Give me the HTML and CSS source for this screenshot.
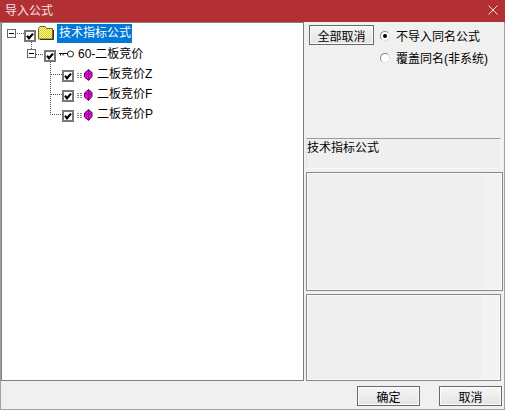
FILE: index.html
```html
<!DOCTYPE html>
<html lang="zh">
<head>
<meta charset="utf-8">
<title>导入公式</title>
<link rel="stylesheet" href="styles.css">
</head>
<body>
<div class="window">
  <header class="titlebar">
    <span class="title">导入公式</span>
    <svg class="close" width="10" height="10" viewBox="0 0 10 10"><path d="M0.5 0.5L9.5 9.5M9.5 0.5L0.5 9.5" stroke="#f3dcdc" stroke-width="1" fill="none"/></svg>
  </header>
  <main class="content">
    <section class="tree">
      <svg class="connectors" width="80" height="110" viewBox="0 0 80 110">
        <g stroke="#555" stroke-width="1" stroke-dasharray="1 1" fill="none">
          <path d="M16 9.5H24"/>
          <path d="M30.5 18V26"/>
          <path d="M35 30.5H43"/>
          <path d="M49.5 38V90.5H62"/>
          <path d="M50 50.5H62"/>
          <path d="M50 70.5H62"/>
        </g>
      </svg>
      <div class="row level0">
        <span class="expander"></span>
        <svg class="check" width="12" height="12" viewBox="0 0 12 12"><rect x="1" y="1" width="10" height="10" fill="#fff" stroke="#777" stroke-width="2"/><path d="M3 5.8L5 8.2L9 3.6" stroke="#000" stroke-width="2.2" fill="none"/></svg>
        <svg class="folder" width="16" height="14" viewBox="0 0 16 14">
          <defs><pattern id="dither" width="2" height="2" patternUnits="userSpaceOnUse"><rect width="2" height="2" fill="#ffff70"/><rect width="1" height="1" fill="#d8c840"/><rect x="1" y="1" width="1" height="1" fill="#d8c840"/></pattern></defs>
          <path d="M0.5 13V2.5L2 0.5H7L8.5 2.5H14.5V13Z" fill="url(#dither)" stroke="#6b6020" stroke-width="1"/>
          <path d="M15.5 4V13.5H2" stroke="#333" fill="none"/>
        </svg>
        <span class="label selected">技术指标公式</span>
      </div>
      <div class="row level1">
        <span class="expander"></span>
        <svg class="check" width="12" height="12" viewBox="0 0 12 12"><rect x="1" y="1" width="10" height="10" fill="#fff" stroke="#777" stroke-width="2"/><path d="M3 5.8L5 8.2L9 3.6" stroke="#000" stroke-width="2.2" fill="none"/></svg>
        <svg class="key" width="15" height="8" viewBox="0 0 15 8"><circle cx="11.5" cy="4" r="3" fill="#fff" stroke="#222"/><path d="M0 3.5H9M1.5 3.5V5.5M4 3.5V5.5" stroke="#111" fill="none"/></svg>
        <span class="label">60-二板竞价</span>
      </div>
      <div class="row level2">
        <svg class="check" width="12" height="12" viewBox="0 0 12 12"><rect x="1" y="1" width="10" height="10" fill="#fff" stroke="#777" stroke-width="2"/><path d="M3 5.8L5 8.2L9 3.6" stroke="#000" stroke-width="2.2" fill="none"/></svg>
        <svg class="gem" width="16" height="12" viewBox="0 0 16 12"><path d="M0 4.5H6M0 6.5H6M0 8.5H6" stroke="#888" stroke-dasharray="2 1" fill="none"/><path d="M11.5 0.5L15 3.5V7.5L11.5 11.5L7.5 8V4Z" fill="#f000e0" stroke="#401040"/><path d="M11.5 1V11M8 4L11.5 6L15 4" stroke="#900090" fill="none"/></svg>
        <span class="label">二板竞价Z</span>
      </div>
      <div class="row level2">
        <svg class="check" width="12" height="12" viewBox="0 0 12 12"><rect x="1" y="1" width="10" height="10" fill="#fff" stroke="#777" stroke-width="2"/><path d="M3 5.8L5 8.2L9 3.6" stroke="#000" stroke-width="2.2" fill="none"/></svg>
        <svg class="gem" width="16" height="12" viewBox="0 0 16 12"><path d="M0 4.5H6M0 6.5H6M0 8.5H6" stroke="#888" stroke-dasharray="2 1" fill="none"/><path d="M11.5 0.5L15 3.5V7.5L11.5 11.5L7.5 8V4Z" fill="#f000e0" stroke="#401040"/><path d="M11.5 1V11M8 4L11.5 6L15 4" stroke="#900090" fill="none"/></svg>
        <span class="label">二板竞价F</span>
      </div>
      <div class="row level2">
        <svg class="check" width="12" height="12" viewBox="0 0 12 12"><rect x="1" y="1" width="10" height="10" fill="#fff" stroke="#777" stroke-width="2"/><path d="M3 5.8L5 8.2L9 3.6" stroke="#000" stroke-width="2.2" fill="none"/></svg>
        <svg class="gem" width="16" height="12" viewBox="0 0 16 12"><path d="M0 4.5H6M0 6.5H6M0 8.5H6" stroke="#888" stroke-dasharray="2 1" fill="none"/><path d="M11.5 0.5L15 3.5V7.5L11.5 11.5L7.5 8V4Z" fill="#f000e0" stroke="#401040"/><path d="M11.5 1V11M8 4L11.5 6L15 4" stroke="#900090" fill="none"/></svg>
        <span class="label">二板竞价P</span>
      </div>
    </section>
    <aside class="side">
      <div class="controls">
        <button class="btn toggle" type="button">全部取消</button>
        <div class="radios">
          <label class="radio"><span class="dot on"></span>不导入同名公式</label>
          <label class="radio"><span class="dot"></span>覆盖同名(非系统)</label>
        </div>
      </div>
      <div class="info">技术指标公式</div>
      <div class="pane pane-mid"></div>
      <div class="pane pane-low"></div>
    </aside>
  </main>
  <footer class="footer">
    <button class="btn action" type="button">确定</button>
    <button class="btn action" type="button">取消</button>
  </footer>
</div>
</body>
</html>
```
FILE: styles.css
```css
* { box-sizing: border-box; }
html, body { margin: 0; padding: 0; }
body {
  width: 505px;
  height: 410px;
  overflow: hidden;
  font-family: "Liberation Sans", "Noto Sans CJK SC", sans-serif;
  font-size: 12px;
  color: #000;
  background: #f0f0f0;
}
.window {
  width: 505px;
  height: 410px;
  display: flex;
  flex-direction: column;
  background: #f0f0f0;
  border-left: 1px solid #a0a0a0;
  border-right: 1px solid #a0a0a0;
  border-bottom: 1px solid #a0a0a0;
}
.titlebar {
  height: 22px;
  margin: 0 -1px;
  padding: 0 7px 3px 5px;
  flex: none;
  display: flex;
  align-items: center;
  justify-content: space-between;
  background: #b23034;
  color: #f4e4e4;
}
.content {
  height: 359px;
  flex: none;
  display: flex;
}
.tree {
  position: relative;
  width: 303px;
  height: 359px;
  flex: none;
  padding-top: 1px;
  background: #fff;
  border: 1px solid #808080;
}
.connectors { position: absolute; left: -1px; top: 1px; }
.row {
  height: 20px;
  display: flex;
  align-items: flex-start;
  line-height: 19px;
}
.level0 { padding-left: 5px; }
.level1 { padding-left: 25px; }
.level2 { padding-left: 60px; }
.expander {
  position: relative;
  width: 9px;
  height: 9px;
  margin-top: 5px;
  margin-right: 8px;
  background: #fff;
  border: 1px solid #666;
  flex: none;
}
.expander::after {
  content: "";
  position: absolute;
  left: 1px;
  top: 3px;
  width: 5px;
  height: 1px;
  background: #000;
}
.check { margin-top: 6px; flex: none; }
.folder { margin-left: 2px; margin-top: 2px; flex: none; }
.key { margin-left: 3px; margin-top: 6px; flex: none; }
.gem { margin-left: 3px; margin-top: 5px; flex: none; }
.label { white-space: nowrap; }
.level0 .label { margin-left: 3px; padding: 0 1px 0 2px; }
.level1 .label { margin-left: 4px; margin-top: 1px; }
.level2 .label { margin-left: 4px; margin-top: 1px; }
.selected { background: #0078d7; color: #fff; }
.side {
  flex: 1;
  display: flex;
  flex-direction: column;
  padding-left: 2px;
  position: relative;
}
.controls {
  height: 116px;
  flex: none;
  display: flex;
  padding: 3px 0 0 3px;
  align-items: flex-start;
}
.btn {
  font: inherit;
  color: #000;
  padding: 0;
  border: 1px solid #6a6a6a;
  background: linear-gradient(#f6f6f6, #e4e4e4);
  box-shadow: inset 0 0 0 1px #fbfbfb;
}
.toggle { width: 65px; height: 20px; }
.radios {
  margin-left: 6px;
  display: flex;
  flex-direction: column;
  gap: 3px;
  padding-top: 1px;
}
.radio { display: flex; align-items: center; height: 19px; }
.dot {
  position: relative;
  width: 10px;
  height: 10px;
  margin-right: 6px;
  border-radius: 50%;
  background: #fff;
  border: 1px solid #8a8a8a;
  border-right-color: #ddd;
  border-bottom-color: #ddd;
}
.dot.on::after {
  content: "";
  position: absolute;
  left: 2px;
  top: 2px;
  width: 4px;
  height: 4px;
  border-radius: 50%;
  background: #000;
}
.info {
  width: 195px;
  height: 31px;
  flex: none;
  line-height: 19px;
  padding-left: 0;
  border-top: 1px solid #9a9a9a;
  border-left: 1px solid #e4e4e4;
  border-right: 1px solid #f8f8f8;
  border-bottom: 1px solid #f8f8f8;
  background: #efefef;
}
.pane {
  flex: none;
  border: 1px solid #888;
  box-shadow: inset 0 0 0 1px #fafafa;
  background: linear-gradient(to right, #efefef 91%, #f4f3f1 91%);
}
.pane-mid { width: 197px; height: 119px; margin-top: 3px; }
.pane-low { width: 195px; height: 87px; margin-top: 3px; }
.footer {
  flex: 1;
  display: flex;
  justify-content: flex-end;
  align-items: flex-start;
  gap: 19px;
  padding: 5px 2px 0 0;
}
.action { width: 63px; height: 20px; }
```
